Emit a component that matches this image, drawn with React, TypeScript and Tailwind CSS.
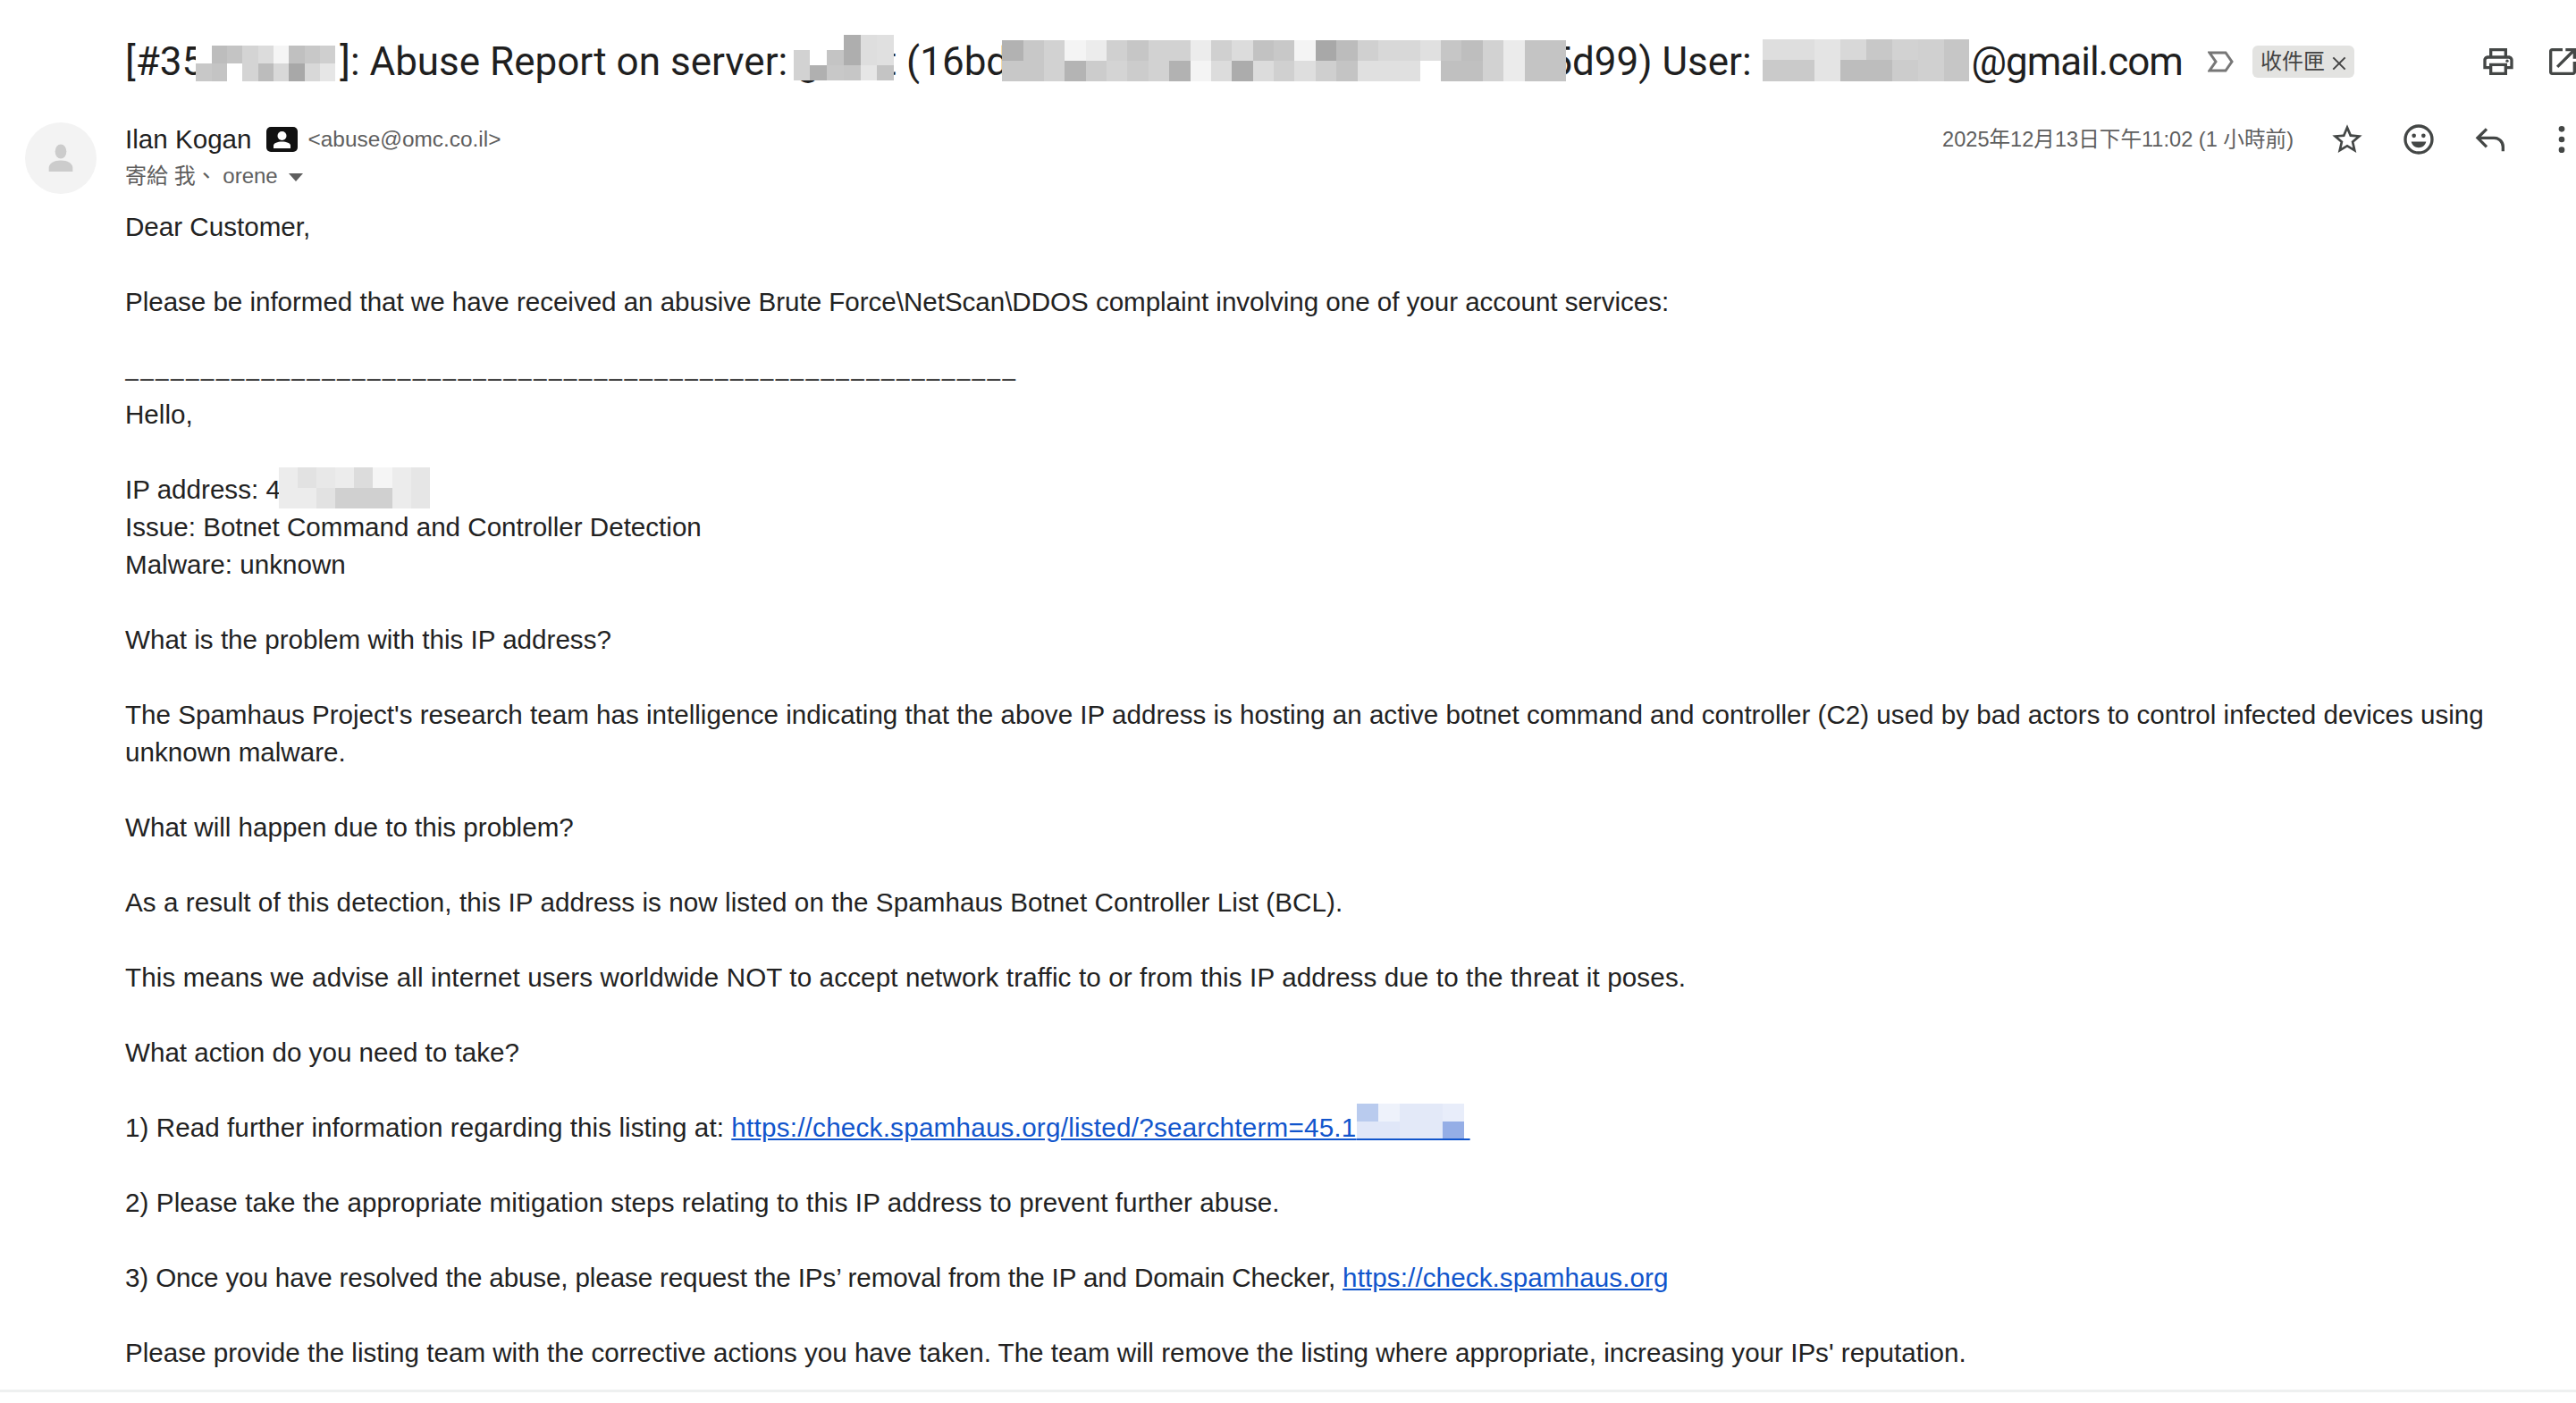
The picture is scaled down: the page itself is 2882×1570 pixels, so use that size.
// pixelated redaction over the text: the spacer keeps the flow, the blocks lie on top
function Mosaic({ cols, spacer, className }: { cols: string[][]; spacer: string; className: string }) {
  return (
    <span className={`relative inline-block h-0 ${spacer}`}>
      <span className={`absolute flex ${className}`}>
        {cols.map((col, i) => (
          <span key={i} className="flex flex-1 flex-col">
            {col.map((c, j) => (
              <span key={j} className="flex-1" style={{ backgroundColor: c }} />
            ))}
          </span>
        ))}
      </span>
    </span>
  )
}

const titleA = [['#ffffff', '#c8c8c8'], ['#bdbdbd', '#c4c4c4'], ['#c4c4c4', '#ffffff'], ['#d4d4d4', '#d4d4d4'], ['#dcdcdc', '#bcbcbc'], ['#f5f5f5', '#d8d8d8'], ['#c0c0c0', '#a8a8a8'], ['#c8c8c8', '#d8d8d8'], ['#cfcfcf', '#e6e6e6']]
const titleB = [['#ffffff', '#d2d2d2', '#d2d2d2'], ['#ffffff', '#ffffff', '#b0b0b0'], ['#ffffff', '#c4c4c4', '#c8c8c8'], ['#aeaeae', '#aeaeae', '#c6c6c6'], ['#dedede', '#dedede', '#e6e6e6'], ['#e0e0e0', '#e0e0e0', '#c4c4c4']]
const titleC = [['#b2b2b2', '#c8c8c8'], ['#c8c8c8', '#c8c8c8'], ['#d2d2d2', '#d2d2d2'], ['#f4f4f4', '#b4b4b4'], ['#ececec', '#cccccc'], ['#d0d0d0', '#d4d4d4'], ['#c6c6c6', '#cccccc'], ['#d2d2d2', '#d2d2d2'], ['#d2d2d2', '#b2b2b2'], ['#ececec', '#f4f4f4'], ['#d0d0d0', '#dcdcdc'], ['#dcdcdc', '#acacac'], ['#c2c2c2', '#dcdcdc'], ['#c8c8c8', '#d0d0d0'], ['#f4f4f4', '#dedede'], ['#a8a8a8', '#cfcfcf'], ['#bcbcbc', '#c4c4c4'], ['#d0d0d0', '#e0e0e0'], ['#d8d8d8', '#e0e0e0'], ['#d8d8d8', '#e0e0e0'], ['#e0e0e0', '#ffffff'], ['#c6c6c6', '#c0c0c0'], ['#bebebe', '#c0c0c0'], ['#d2d2d2', '#d2d2d2'], ['#ebebeb', '#ebebeb'], ['#c4c4c4', '#c4c4c4'], ['#c4c4c4', '#c4c4c4']]
const titleD = [['#dedede', '#cacaca'], ['#dedede', '#cacaca'], ['#e4e4e4', '#e4e4e4'], ['#d8d8d8', '#bdbdbd'], ['#c8c8c8', '#bdbdbd'], ['#d2d2d2', '#cccccc'], ['#d0d0d0', '#d0d0d0'], ['#c6c6c6', '#c6c6c6']]
const ipCols = [['#ececec', '#ececec'], ['#e2e2e2', '#ececec'], ['#e8e8e8', '#e2e2e2'], ['#ececec', '#d0d0d0'], ['#dcdcdc', '#d0d0d0'], ['#f5f5f5', '#d0d0d0'], ['#ececec', '#ececec'], ['#e6e6e6', '#e6e6e6']]
const linkCols = [['#b9cbee', '#e0e7f8'], ['#eef2fb', '#e0e7f8'], ['#e3e9f8', '#e3e9f8'], ['#e3e9f8', '#e3e9f8'], ['#e8edfa', '#95aee6']]

function Body() {
  return (
    <div className="pl-[140px] pr-[90px] mt-[16px] text-[29.6px] leading-[42px] text-[#222222] font-['Liberation_Sans',sans-serif]">
      Dear Customer,<br />
      <br />
      <span className="tracking-[-0.04px]">Please be informed that we have received an abusive Brute Force\NetScan\DDOS complaint involving one of your account services:</span><br />
      <br />
      <span className="text-[27px] leading-none tracking-[1.9px]">{'–'.repeat(59)}</span><br />
      Hello,<br />
      <br />
      IP address: 4<Mosaic cols={ipCols} spacer="w-[169px]" className="left-[-2px] bottom-[-11px] h-[46px] w-[169px]" /><br />
      Issue: Botnet Command and Controller Detection<br />
      Malware: unknown<br />
      <br />
      What is the problem with this IP address?<br />
      <br />
      The Spamhaus Project's research team has intelligence indicating that the above IP address is hosting an active botnet command and controller (C2) used by bad actors to control infected devices using unknown malware.<br />
      <br />
      What will happen due to this problem?<br />
      <br />
      <span className="tracking-[0.07px]">As a result of this detection, this IP address is now listed on the Spamhaus Botnet Controller List (BCL).</span><br />
      <br />
      <span className="tracking-[0.13px]">This means we advise all internet users worldwide NOT to accept network traffic to or from this IP address due to the threat it poses.</span><br />
      <br />
      What action do you need to take?<br />
      <br />
      <span className="tracking-[0.07px]">1) Read further information regarding this listing at: </span>
      <a className="text-[#1155cc] underline tracking-[0.25px]">https://check.spamhaus.org/listed/?searchterm=45.1<Mosaic cols={linkCols} spacer="w-0" className="left-0 bottom-[-2px] h-[39px] w-[120px]" />{'\u00a0'.repeat(15)}</a><br />
      <br />
      <span className="tracking-[0.09px]">2) Please take the appropriate mitigation steps relating to this IP address to prevent further abuse.</span><br />
      <br />
      <span className="tracking-[-0.13px]">3) Once you have resolved the abuse, please request the IPs’ removal from the IP and Domain Checker, </span>
      <a className="text-[#1155cc] underline tracking-[0.1px]">https://check.spamhaus.org</a><br />
      <br />
      Please provide the listing team with the corrective actions you have taken. The team will remove the listing where appropriate, increasing your IPs' reputation.
    </div>
  )
}

export default function App() {
  return (
    <div className="h-[1570px] w-[2882px] overflow-hidden bg-white">
      <div className="h-[1555px] overflow-hidden">
        {/* Subject */}
        <div className="flex h-[137px] items-center pl-[140px]">
          <h1 className="whitespace-nowrap text-[44px] leading-[50px] text-[#1f1f1f] font-['Roboto',sans-serif]">
            [#35<Mosaic cols={titleA} spacer="w-[152px]" className="left-[-9px] bottom-[-7px] h-[40px] w-[156px]" />]: Abuse Report on server: g<Mosaic cols={titleB} spacer="w-[72px]" className="left-[-29px] bottom-[-7px] h-[52px] w-[112px]" />t (16bd<Mosaic cols={titleC} spacer="w-[606px]" className="left-[-7px] bottom-[-7px] h-[46px] w-[631px]" />5d99) User: <Mosaic cols={titleD} spacer="w-[235px]" className="left-[2px] bottom-[-7px] h-[47px] w-[231px]" /><span className="tracking-[-1px]">@gmail.com</span>
          </h1>
          <svg viewBox="0 0 30 24" className="ml-[28px] h-[24px] w-[30px] shrink-0" fill="none" stroke="#777777" strokeWidth="3">
            <path d="M2 2h18l7 10-7 10H2l7-10z" />
          </svg>
          <span className="ml-[20px] flex h-[36px] w-[114px] shrink-0 items-center rounded-[6px] bg-[#e3e3e1] pl-[9px] text-[24px] text-[#444444] font-['Liberation_Sans','Noto_Sans_CJK_TC',sans-serif]">
            收件匣
            <svg viewBox="0 0 12 12" className="ml-[6px] mt-[4px] h-[20px] w-[20px]" stroke="#444444" strokeWidth="1.2">
              <path d="M2 2l8 8M10 2l-8 8" />
            </svg>
          </span>
          <svg viewBox="0 0 24 24" className="ml-auto h-[40px] w-[40px] shrink-0" fill="#444746">
            <path d="M19 8h-1V3H6v5H5c-1.66 0-3 1.34-3 3v6h4v4h12v-4h4v-6c0-1.66-1.34-3-3-3zM8 5h8v3H8V5zm8 12v2H8v-4h8v2zm2-2v-2H6v2H4v-4c0-.55.45-1 1-1h14c.55 0 1 .45 1 1v4h-2z" />
            <circle cx="18" cy="11.5" r="1" />
          </svg>
          <svg viewBox="0 0 24 24" className="ml-[32px] mr-[-5px] h-[40px] w-[40px] shrink-0" fill="#444746">
            <path d="M19 19H5V5h7V3H5c-1.11 0-2 .9-2 2v14c0 1.1.89 2 2 2h14c1.1 0 2-.9 2-2v-7h-2v7zM14 3v2h3.59l-9.83 9.83 1.41 1.41L19 6.41V10h2V3h-7z" />
          </svg>
        </div>

        {/* Sender row */}
        <div className="flex h-[80px]">
          <div className="ml-[28px] flex h-[80px] w-[80px] shrink-0 items-center justify-center rounded-full bg-[#f3f3f3]">
            <svg viewBox="0 0 24 24" className="h-[40px] w-[40px]" fill="#cccccc">
              <ellipse cx="12" cy="7.5" rx="3.8" ry="4.8" />
              <path d="M4 21v-2.500c0-3 3.500-5 8-5s8 2 8 5v2.500z" />
            </svg>
          </div>
          <div className="ml-[32px] flex-1 font-['Liberation_Sans',sans-serif]">
            <div className="flex h-[38px] items-center">
              <span className="text-[29.6px] text-[#1f1f1f]">Ilan Kogan</span>
              <svg viewBox="0 0 35 28" className="ml-[16px] h-[28px] w-[35px]">
                <rect width="35" height="28" rx="5" fill="#111111" />
                <circle cx="17.5" cy="10" r="5" fill="#ffffff" />
                <path d="M8 24v-3c0-3 4.5-4.500 9.500-4.500S27 18 27 21v3z" fill="#ffffff" />
              </svg>
              <span className="ml-[12px] text-[24.4px] text-[#5e5e5e]">&lt;abuse@omc.co.il&gt;</span>
              <span className="ml-auto mt-[2px] text-[23.6px] text-[#5e5e5e] font-['Liberation_Sans','Noto_Sans_CJK_TC',sans-serif]">2025年12月13日下午11:02 (1 小時前)</span>
              <svg viewBox="0 0 24 24" className="ml-[40px] h-[40px] w-[40px]" fill="#444746">
                <path d="M22 9.24l-7.19-.62L12 2 9.19 8.63 2 9.24l5.46 4.73L5.82 21 12 17.27 18.18 21l-1.63-7.03L22 9.24zM12 15.4l-3.76 2.27 1-4.28-3.32-2.88 4.38-.38L12 6.1l1.71 4.04 4.38.38-3.32 2.88 1 4.28L12 15.4z" />
              </svg>
              <svg viewBox="0 0 24 24" className="ml-[40px] h-[40px] w-[40px]">
                <circle cx="12" cy="12" r="9" fill="none" stroke="#444746" strokeWidth="2" />
                <circle cx="8.8" cy="9.5" r="1.4" fill="#444746" />
                <circle cx="15.2" cy="9.5" r="1.4" fill="#444746" />
                <path d="M7 13.5h10c-.6 2.600-2.600 4-5 4s-4.400-1.400-5-4z" fill="#444746" />
              </svg>
              <svg viewBox="0 0 24 24" className="ml-[41px] h-[40px] w-[40px]" fill="none" stroke="#444746" strokeWidth="2">
                <path d="M9 5l-6 6 6 6M3 11h11a6 6 0 0 1 6 6v3" />
              </svg>
              <svg viewBox="0 0 24 24" className="ml-[39px] mr-[-4px] h-[40px] w-[40px] shrink-0" fill="#444746">
                <circle cx="12" cy="5" r="2" />
                <circle cx="12" cy="12" r="2" />
                <circle cx="12" cy="19" r="2" />
              </svg>
            </div>
            <div className="mt-[4px] flex items-center text-[24px] text-[#5e5e5e] font-['Liberation_Sans','Noto_Sans_CJK_TC',sans-serif]">
              寄給 我、 orene
              <span className="ml-[12px] mt-[2px] h-0 w-0 border-x-[8px] border-t-[9px] border-x-transparent border-t-[#5e5e5e]" />
            </div>
          </div>
        </div>

        <Body />
      </div>
      <div className="h-[3px] bg-[#eef0f0]" />
    </div>
  )
}
